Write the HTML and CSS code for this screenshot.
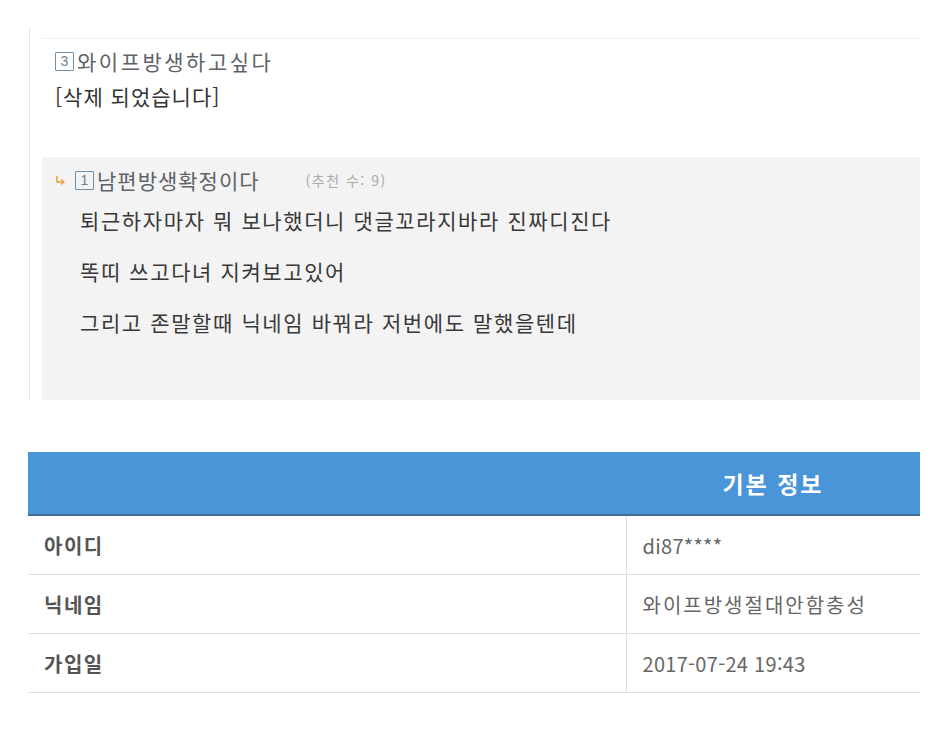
FILE: index.html
```html
<!DOCTYPE html>
<html lang="ko">
<head>
    <meta charset="UTF-8">
    <meta name="viewport" content="width=device-width, initial-scale=1.0">
    <title>댓글 / 기본 정보</title>
    <link rel="stylesheet" href="styles.css">
</head>
<body>

    <div class="comments">
        <div class="comment">
            <div class="comment-head">
                <span class="num">3</span>
                <span class="nick">와이프방생하고싶다</span>
            </div>
            <p class="deleted">[삭제 되었습니다]</p>
        </div>

        <div class="reply">
            <div class="comment-head">
                <svg class="arrow" width="10" height="10" viewBox="0 0 10 10">
                    <path d="M2 1 V7 H8" fill="none" stroke="#e9a23b" stroke-width="1.6"/>
                    <path d="M6 4.5 L9 7 L6 9.5" fill="none" stroke="#e9a23b" stroke-width="1.4"/>
                </svg>
                <span class="num">1</span>
                <span class="nick">남편방생확정이다</span>
                <span class="votes">(추천 수: 9)</span>
            </div>
            <div class="reply-body">
                <p>퇴근하자마자 뭐 보나했더니 댓글꼬라지바라 진짜디진다</p>
                <p>똑띠 쓰고다녀 지켜보고있어</p>
                <p>그리고 존말할때 닉네임 바꿔라 저번에도 말했을텐데</p>
            </div>
        </div>
    </div>

    <table class="info">
        <thead>
            <tr>
                <th class="label-col"></th>
                <th>기본 정보</th>
            </tr>
        </thead>
        <tbody>
            <tr>
                <td class="label">아이디</td>
                <td class="value">di87****</td>
            </tr>
            <tr>
                <td class="label">닉네임</td>
                <td class="value ko">와이프방생절대안함충성</td>
            </tr>
            <tr>
                <td class="label">가입일</td>
                <td class="value">2017-07-24 19:43</td>
            </tr>
        </tbody>
    </table>

</body>
</html>
```

FILE: styles.css
```css
body {
    font-family: "Noto Sans CJK KR", "Noto Sans", sans-serif;
    background-color: #fff;
    color: #333;
    margin: 0;
}
.comments {
    margin: 27px 27px 0 29px;
    padding: 11px 0 0 12px;
    border-left: 1px solid #e4e4e4;
}
.comment {
    border-top: 1px solid #eeeeee;
    padding: 10px 0 0 13px;
    margin-bottom: 48px;
}
.comment-head {
    display: flex;
    align-items: center;
    height: 24px;
}
.comment-head .num {
    flex: 0 0 auto;
    display: block;
    box-sizing: border-box;
    width: 19px;
    height: 19px;
    border: 1px solid #6f8ea8;
    border-radius: 1px;
    font-family: "Liberation Sans", sans-serif;
    font-size: 14px;
    line-height: 17px;
    text-align: center;
    color: #6f7f8c;
    margin-right: 3px;
}
.nick {
    font-size: 21px;
    line-height: 24px;
    letter-spacing: 2.5px;
    color: #5d6368;
    white-space: nowrap;
}
.deleted {
    margin: 10px 0 0;
    font-size: 21px;
    line-height: 26px;
    letter-spacing: 1px;
    color: #333;
}
.reply {
    background-color: #f3f3f3;
    padding: 11px 13px 65px 13px;
}
.arrow {
    flex: none;
    margin-right: 10px;
}
.reply .nick {
    letter-spacing: 1px;
}
.votes {
    font-size: 14px;
    letter-spacing: 1.5px;
    color: #aaa;
    margin-left: 46px;
    white-space: nowrap;
}
.reply-body {
    margin: 15px 0 0 25px;
}
.reply-body p {
    margin: 0 0 25px;
    font-size: 21px;
    line-height: 26px;
    letter-spacing: 1.6px;
    color: #383838;
}
.reply-body p:last-child {
    margin-bottom: 0;
}
.info {
    margin: 52px 0 0 28px;
    width: 892px;
    border-collapse: collapse;
}
.info th {
    background-color: #4a95d8;
    color: #fff;
    font-size: 23px;
    font-weight: bold;
    height: 62px;
    padding: 0;
    border-bottom: 2px solid #3d6f99;
    text-align: center;
    letter-spacing: 2px;
}
.info .label-col {
    width: 598px;
}
.info td {
    height: 58px;
    padding: 0 16px;
    border-bottom: 1px solid #dedede;
    font-size: 20px;
}
.label {
    font-weight: bold;
    color: #555;
    letter-spacing: 1.5px;
}
.value {
    border-left: 1px solid #dedede;
    color: #666;
    letter-spacing: 0.3px;
}
.value.ko {
    letter-spacing: 2px;
}
```
